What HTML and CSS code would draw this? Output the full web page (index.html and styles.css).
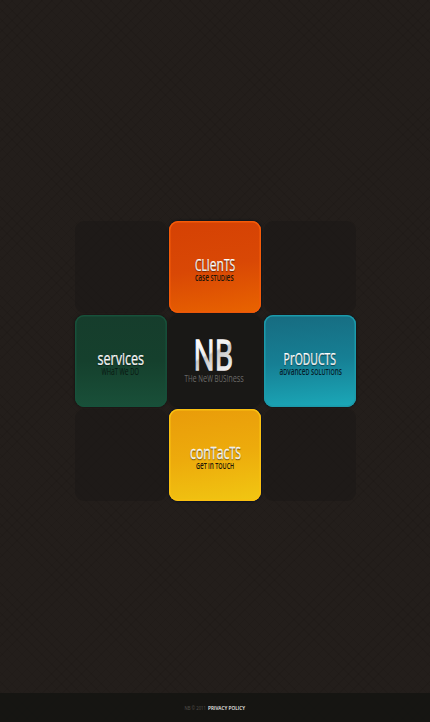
FILE: index.html
```html
<!DOCTYPE html>
<html lang="en">
<head>
<meta charset="utf-8">
<title>NB - The New Business</title>
<link rel="stylesheet" href="styles.css">
</head>
<body>
<main>
<nav class="grid">
<div class="tile empty"></div>
<a class="tile clients"><svg viewBox="0 0 92 92"><text class="title" transform="translate(26 50) scale(.67 1)">CLI<tspan class="low">en</tspan>TS</text><text class="sub" transform="translate(26 59.5) scale(.62 1)"><tspan class="slow">case</tspan> STUDI<tspan class="slow">es</tspan></text></svg></a>
<div class="tile empty"></div>
<a class="tile services"><svg viewBox="0 0 92 92"><text class="title" transform="translate(22.5 50) scale(.7 1)"><tspan class="low">serv</tspan>I<tspan class="low">ces</tspan></text><text class="sub" transform="translate(26.5 59.5) scale(.642 1)">WH<tspan class="slow">a</tspan>T W<tspan class="slow">e</tspan> DO</text></svg></a>
<a class="tile home"><svg viewBox="0 0 92 92"><defs><linearGradient id="silver" x1="0" y1="0" x2=".35" y2="1"><stop offset=".2" stop-color="#fff"/><stop offset=".56" stop-color="#f1f1f1"/><stop offset=".6" stop-color="#c9c9c9"/><stop offset="1" stop-color="#f4f4f4"/></linearGradient></defs><text class="logo" transform="translate(24.5 55) scale(.67 1)">NB</text><text class="sub" transform="translate(15.5 66.5) scale(.694 1)">TH<tspan class="slow">e</tspan> N<tspan class="slow">e</tspan>W BUSI<tspan class="slow">ness</tspan></text></svg></a>
<a class="tile products"><svg viewBox="0 0 92 92"><text class="title" transform="translate(19.5 49.5) scale(.675 1)">P<tspan class="low">r</tspan>ODUCTS</text><text class="sub" transform="translate(15.5 59.5) scale(.612 1)"><tspan class="slow">a</tspan>D<tspan class="slow">vance</tspan>D <tspan class="slow">s</tspan>OLUTIO<tspan class="slow">ns</tspan></text></svg></a>
<div class="tile empty"></div>
<a class="tile contacts"><svg viewBox="0 0 92 92"><text class="title" transform="translate(21 50) scale(.685 1)"><tspan class="low">con</tspan>T<tspan class="low">ac</tspan>TS</text><text class="sub" transform="translate(27 59.5) scale(.605 1)">G<tspan class="slow">e</tspan>T I<tspan class="slow">n</tspan> TOUCH</text></svg></a>
<div class="tile empty"></div>
</nav>
</main>
<footer><svg viewBox="0 0 430 29"><text class="copy" x="184.5" y="17" textLength="21.5" lengthAdjust="spacingAndGlyphs">NB © 2011</text><text class="policy" x="208" y="17" textLength="37" lengthAdjust="spacingAndGlyphs">PRIVACY POLICY</text></svg></footer>
</body>
</html>
```

FILE: styles.css
```css
* { box-sizing: border-box; }
body {
  margin: 0;
  height: 722px;
  display: flex;
  flex-direction: column;
  overflow: hidden;
  background-color: #231e1b;
  background-image:
    repeating-linear-gradient(45deg, rgba(0,0,0,.07) 0 1px, transparent 1px 7px),
    repeating-linear-gradient(-45deg, rgba(0,0,0,.07) 0 1px, transparent 1px 7px);
  font-family: "Open Sans", "Noto Sans", sans-serif;
}
main { flex: 1; padding: 221px 0 0 75px; }
.grid {
  display: grid;
  grid-template-columns: 92px 92px 93px;
  grid-template-rows: repeat(3, 92px);
  gap: 2px;
}
.tile { width: 92px; height: 92px; border-radius: 9px; }
.tile:nth-child(3n) { margin-left: 1px; }
svg { display: block; width: 100%; height: 100%; overflow: visible; }
.empty { background: rgba(25,24,21,.48); }
.clients {
  background: linear-gradient(170deg, #d54104, #d94805 50%, #e96400);
  box-shadow: inset 0 0 0 1.5px #f45b09, 0 0 2px 1px #11151b;
}
.services {
  background: linear-gradient(#163d2c, #15402d 50%, #195039);
  box-shadow: inset 0 0 0 1.5px #17513a, 0 0 2px 1px #1b1715;
}
.home { background: #191816; box-shadow: 0 0 2px 1px #1b1917; }
.products {
  background: linear-gradient(175deg, #176b80, #167f94 50%, #1ba9b9);
  box-shadow: inset 0 0 0 1.5px #1b9aaa, 0 0 2px 1px #171719;
}
.contacts {
  background: linear-gradient(170deg, #e99b0a, #edab0c 50%, #f1c712);
  box-shadow: inset 0 0 0 1.5px #fac011, 0 0 2px 1px #0e1422;
}
.title { font-size: 15.4px; fill: #fff; stroke: #fff; stroke-width: .25px; text-shadow: 0 1px 1px rgba(0,0,0,.45); }
.low { font-size: 18px; }
.sub { font-size: 9px; font-weight: 600; fill: #211509; }
.slow { font-size: 10.6px; }
.services .sub { fill: #07150f; font-weight: 400; }
.products .sub { fill: #06222c; }
.home .sub { fill: #6a6967; font-weight: 400; }
.logo { font-size: 42px; fill: url(#silver); stroke: url(#silver); stroke-width: 1.4px; }
footer { height: 29px; background: rgba(20,20,17,.86); }
.copy, .policy { font-size: 5.5px; fill: #55524d; }
.policy { fill: #f0f0ed; font-weight: 600; }
```
